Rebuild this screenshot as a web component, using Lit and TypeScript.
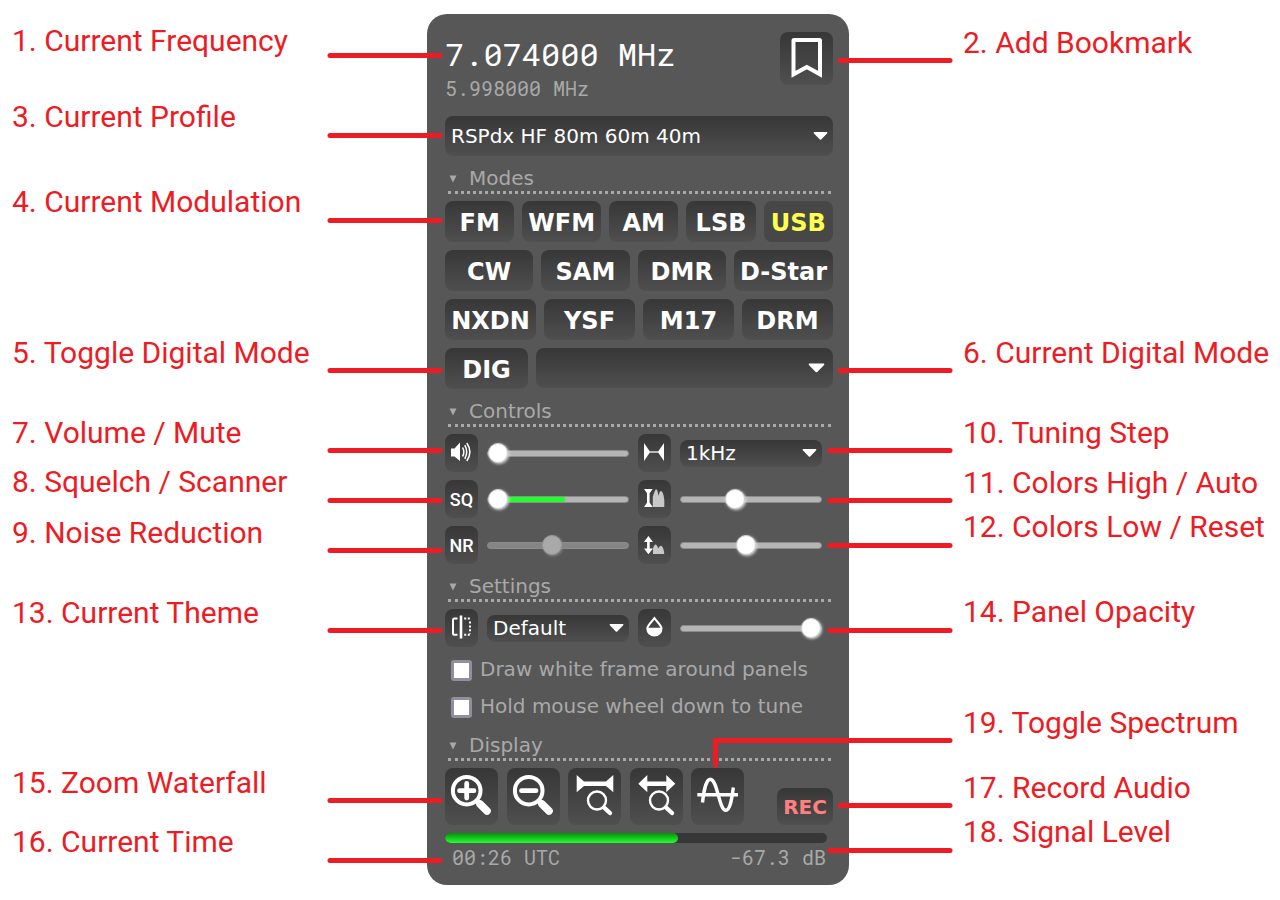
import { LitElement, html, css, svg } from "lit";
import { customElement, property } from "lit/decorators.js";

type Note = { text: string; y: number };

// Vertical centres of the callout texts, measured from the top of the figure.
const LEFT_NOTES: Note[] = [
  { text: "1. Current Frequency", y: 41 },
  { text: "3. Current Profile", y: 117 },
  { text: "4. Current Modulation", y: 202 },
  { text: "5. Toggle Digital Mode", y: 353 },
  { text: "7. Volume / Mute", y: 433 },
  { text: "8. Squelch / Scanner", y: 482 },
  { text: "9. Noise Reduction", y: 533 },
  { text: "13. Current Theme", y: 613 },
  { text: "15. Zoom Waterfall", y: 783 },
  { text: "16. Current Time", y: 842 },
];

const RIGHT_NOTES: Note[] = [
  { text: "2. Add Bookmark", y: 43 },
  { text: "6. Current Digital Mode", y: 353 },
  { text: "10. Tuning Step", y: 433 },
  { text: "11. Colors High / Auto", y: 483 },
  { text: "12. Colors Low / Reset", y: 527 },
  { text: "14. Panel Opacity", y: 612 },
  { text: "19. Toggle Spectrum", y: 723 },
  { text: "17. Record Audio", y: 788 },
  { text: "18. Signal Level", y: 832 },
];

// Leader lines, in coordinates of the panel column.
const LEADERS = [
  ...[55, 135, 220, 370, 450, 500, 550, 630, 800, 860].map((y) => `M-97 ${y + 0.5}H13`),
  "M413 60.5H523",
  "M413 370.5H523",
  "M403 450.5H523",
  "M403 500.5H523",
  "M403 545.5H523",
  "M403 630.5H523",
  "M288.5 765V740.5H523",
  "M413 805.5H523",
  "M403 850.5H523",
];

const MODES = [
  ["FM", "WFM", "AM", "LSB", "USB"],
  ["CW", "SAM", "DMR", "D-Star"],
  ["NXDN", "YSF", "M17", "DRM"],
];

const lens = svg`
  <circle cx="29" cy="32.5" r="9" fill="none" stroke="#fff" stroke-width="2.4"></circle>
  <path d="M36 39.5L42 45" stroke="#fff" stroke-width="4.4" stroke-linecap="round"></path>`;

const magnifier = svg`
  <circle cx="21.7" cy="22.7" r="13.8" fill="none" stroke="#fff" stroke-width="4"></circle>
  <path d="M31.5 32.5L34 35" stroke="#fff" stroke-width="5"></path>
  <path d="M35 36L42 43" stroke="#fff" stroke-width="7.6" stroke-linecap="round"></path>`;

const ICONS = {
  bookmark: svg`<path d="M13.5 8.5Q13.5 8 14 8H39.5Q40 8 40 8.5V42.3L26.8 35L13.5 42.3Z" fill="none" stroke="#fff" stroke-width="4"></path>`,
  speaker: svg`
    <path d="M6 14.5H9.5L15 8.5V27L9.5 22.5H6Z" fill="#fff"></path>
    <path d="M17.6 13.5Q20 18 17.6 22.5M19.8 11.2Q23.6 18 19.8 24.8M21.8 9Q28 18 21.8 27" fill="none" stroke="#fff" stroke-width="1.5"></path>`,
  step: svg`
    <path d="M11 18H21" stroke="#bbb" stroke-width="2"></path>
    <path d="M6 9L11.5 17V19L6 27ZM26 9L20.5 17V19L26 27Z" fill="#fff"></path>`,
  high: svg`
    <path d="M14.8 27V17Q17 9 18.3 9.3Q19.8 10 20.4 16Q21.6 11 23 11Q25.4 11.5 26.3 20V27Z" fill="#c8c8c8"></path>
    <path d="M6 9H14.7L11.6 13.2V22.8L14.7 27H6L9 22.8V13.2Z" fill="#fff"></path>`,
  low: svg`
    <path d="M15 28V22.5Q16.5 18 18 18.6Q19.5 20 20.2 22.5Q22 19 23.6 20Q25.8 22 26.3 28Z" fill="#c8c8c8"></path>
    <path d="M10.4 10L15 16H11.7V22.5H15L10.4 28.3L6 22.5H9.1V16H6Z" fill="#fff"></path>`,
  theme: svg`
    <path d="M12.5 9.6H9.6Q8 9.6 8 11.2V24.2Q8 25.8 9.6 25.8H12.5" fill="none" stroke="#fff" stroke-width="2"></path>
    <path d="M16 6.5V29.5" stroke="#fff" stroke-width="2.6"></path>
    <path d="M19.2 9.6H24.8M19.2 25.8H24.8" stroke="#fff" stroke-width="2" stroke-dasharray="2 1.6"></path>
    <path d="M25 12.6V24.4" stroke="#fff" stroke-width="2" stroke-dasharray="2 1.8"></path>`,
  drop: svg`
    <path d="M16.4 9.2C13.6 13 9.3 16.6 9.3 19.4A7.1 7.1 0 0 0 23.5 19.4C23.5 16.6 19.2 13 16.4 9.2Z" fill="none" stroke="#fff" stroke-width="2"></path>
    <path d="M9 18.7H23.8Q24 26 16.4 26.4Q9 26 9 18.7Z" fill="#fff"></path>`,
  zoomIn: svg`${magnifier}<path d="M14.5 22.7H29M21.7 15.5V30" stroke="#fff" stroke-width="4.8" stroke-linecap="round"></path>`,
  zoomOut: svg`${magnifier}<path d="M14.5 22.7H29" stroke="#fff" stroke-width="4.8" stroke-linecap="round"></path>`,
  zoomFit: svg`
    <path d="M8.7 7L16 13.4H38L45.3 7V24.3L38 18H16L8.7 24.3Z" fill="#fff"></path>${lens}`,
  zoomWide: svg`
    <path d="M8.3 15.7L17.3 7V13.4H36.3V7L45.3 15.7L36.3 24.3V18H17.3V24.3Z" fill="#fff"></path>${lens}`,
  wave: svg`
    <path d="M6.3 26.7H47" stroke="#fff" stroke-width="3.4"></path>
    <path d="M11.5 34.5C12.6 23 15.5 11.2 19.3 11.2C26.5 11.2 28 42.3 34.7 42.3C39.5 42.3 41 29 42.3 19.5" fill="none" stroke="#fff" stroke-width="3.4"></path>`,
};

@customElement("app-root")
export class AppRoot extends LitElement {
  @property() mode = "USB";

  static styles = css`
    :host {
      display: block;
      min-height: 100vh;
      background: #fff;
      font-family: "DejaVu Sans", Verdana, sans-serif;
      font-size: 20px;
    }
    * {
      box-sizing: border-box;
    }
    .stage {
      display: grid;
      grid-template-columns: minmax(427px, 1fr) 422px minmax(427px, 1fr);
      padding-right: 4px;
    }
    .notes {
      position: relative;
      margin: 0;
      padding: 0;
      list-style: none;
      font-family: Bahnschrift, Roboto, sans-serif;
      font-size: 30px;
      line-height: 36px;
      color: #ed1c24;
      white-space: nowrap;
    }
    .note {
      position: absolute;
      translate: 0 -50%;
    }
    .notes.left .note {
      left: calc(100% - 415px);
    }
    .notes.right .note {
      left: 114px;
    }
    .middle {
      position: relative;
      padding-top: 14px;
    }
    .leaders {
      position: absolute;
      top: 0;
      left: 0;
      width: 1px;
      height: 1px;
      overflow: visible;
      pointer-events: none;
      fill: none;
      stroke: #ed1c24;
      stroke-width: 5px;
      stroke-linecap: round;
    }
    .panel {
      padding: 18px 16px 15px 18px;
      border-radius: 20px;
      background: #575757;
      color: #a9a9a9;
    }
    .mono {
      font-family: "Roboto Mono", "DejaVu Sans Mono", monospace;
    }
    .header {
      display: flex;
      justify-content: space-between;
      align-items: flex-start;
      height: 84px;
    }
    .frequency {
      margin-top: 2px;
      font-size: 32px;
      line-height: 40px;
      color: #fff;
    }
    .cursor {
      line-height: 28px;
    }
    .btn,
    .select {
      margin: 0;
      border: 0;
      border-radius: 8px;
      background: linear-gradient(#373737, #4f4f4f);
      color: #fff;
      font-family: inherit;
    }
    .btn {
      padding: 0;
      display: block;
      cursor: pointer;
    }
    .btn svg {
      display: block;
    }
    .mode {
      flex: 1 1 0;
      height: 41px;
      padding: 3px 6px 0;
      font-size: 24px;
      font-weight: bold;
      line-height: 38px;
      white-space: nowrap;
    }
    .mode.on {
      background: #474747;
      color: #ffff50;
    }
    .picker {
      position: relative;
      display: block;
      flex: 1;
    }
    .select {
      display: block;
      width: 100%;
      height: 27px;
      padding: 0 30px 0 6px;
      appearance: none;
      font-size: 20px;
      line-height: 27px;
    }
    .tall .select {
      height: 40px;
      line-height: 40px;
    }
    .arrow {
      position: absolute;
      top: 50%;
      right: 5px;
      translate: 0 -50%;
      fill: #fff;
      pointer-events: none;
    }
    .wide .arrow {
      right: 8px;
    }
    .section {
      margin-top: 10px;
    }
    .title {
      display: flex;
      align-items: center;
      gap: 12px;
      height: 28px;
      margin: 0 2px 7px 3px;
      padding-left: 1px;
      border-bottom: 3px dotted #a9a9a9;
      line-height: 25px;
      list-style: none;
      cursor: pointer;
    }
    .rows {
      display: flex;
      flex-direction: column;
      gap: 8px;
    }
    .row {
      display: flex;
      align-items: flex-start;
      gap: 8px;
    }
    .dig {
      flex: 0 0 83px;
    }
    .controls {
      display: grid;
      grid-template-columns: 33px 1fr 33px 1fr;
      gap: 8px 9px;
      align-items: center;
      padding-right: 11px;
    }
    .small {
      width: 33px;
      height: 38px;
      font-family: Bahnschrift, "Roboto", sans-serif;
      font-size: 18px;
      font-weight: 500;
    }
    .slider {
      appearance: none;
      width: 100%;
      height: 20px;
      margin: 0;
      background: none;
      --track: #b5b5b5;
    }
    .slider::-webkit-slider-runnable-track {
      height: 7px;
      border: 1px solid #8c8c8c;
      border-radius: 4px;
      background: var(--track);
    }
    .slider::-webkit-slider-thumb {
      appearance: none;
      width: 20px;
      height: 20px;
      margin-top: -8px;
      border: 1px solid #ccc;
      border-radius: 50%;
      background: #fff;
      box-shadow: 1px 1px 3px #ddd;
    }
    .slider.squelch {
      --track: linear-gradient(90deg, #22ff2e 55%, #b5b5b5 55%);
    }
    .slider:disabled {
      --track: #858585;
    }
    .slider:disabled::-webkit-slider-thumb {
      border-color: #999;
      background: #a9a9a9;
      box-shadow: 1px 1px 3px #888;
    }
    .checks {
      display: flex;
      flex-direction: column;
      gap: 9px;
      padding: 8px 6px 3px;
    }
    .check {
      display: flex;
      align-items: center;
      gap: 8px;
      height: 28px;
      white-space: nowrap;
    }
    .box {
      appearance: none;
      flex: none;
      width: 21px;
      height: 21px;
      margin: 2px 0 0;
      border: 3px solid #8f8f9d;
      border-radius: 3px;
      background: #fff;
    }
    .display {
      display: flex;
      justify-content: space-between;
      align-items: flex-end;
    }
    .tools {
      display: flex;
      flex: 1;
      justify-content: space-between;
      margin-right: 33px;
    }
    .rec {
      width: 56px;
      height: 37px;
      color: #ff8080;
      font-size: 20px;
      font-weight: bold;
    }
    .meter {
      height: 10px;
      margin: 8px 6px 0 0;
      border-radius: 5px;
      background: #373737;
      overflow: hidden;
    }
    .level {
      height: 100%;
      border-radius: 5px;
      background: linear-gradient(#0a8c10, #22ff2e);
    }
    .status {
      display: flex;
      justify-content: space-between;
      padding: 1px 7px 0;
      line-height: 26px;
    }
  `;

  private icon(name: keyof typeof ICONS, w: number, h: number) {
    return html`<svg width=${w} height=${h} viewBox="0 0 ${w} ${h}" aria-hidden="true">${ICONS[name]}</svg>`;
  }

  private button(name: keyof typeof ICONS, label: string, w = 33, h = 38) {
    return html`<button class="btn" aria-label=${label}>${this.icon(name, w, h)}</button>`;
  }

  private picker(label: string, value: string, size = "") {
    const [w, h] = size === "tall wide" ? [17, 10] : [15, 9];
    return html`<label class="picker ${size}">
      <select class="select" aria-label=${label}><option>${value}</option></select>
      <svg class="arrow" width=${w} height=${h} viewBox="0 0 15 9" preserveAspectRatio="none">
        <path d="M1 0.5H14Q15 1 14 2L8.2 8Q7.5 8.6 6.8 8L1 2Q0 1 1 0.5Z"></path>
      </svg>
    </label>`;
  }

  private slider(label: string, value: number, cls = "", disabled = false) {
    return html`<input class="slider ${cls}" type="range" min="0" max="100" aria-label=${label} .value=${String(value)} ?disabled=${disabled} />`;
  }

  private title(text: string) {
    return html`<summary class="title">
      <svg width="8" height="8" viewBox="0 0 8 8" aria-hidden="true"><path d="M0.5 0.5H7.5L4 7.5Z" fill="#a9a9a9"></path></svg>
      <span>${text}</span>
    </summary>`;
  }

  private notes(side: string, items: Note[]) {
    return html`<ul class="notes ${side}">
      ${items.map((n) => html`<li class="note" style="top:${n.y}px">${n.text}</li>`)}
    </ul>`;
  }

  render() {
    return html`<main class="stage">
      ${this.notes("left", LEFT_NOTES)}
      <div class="middle">
        <section class="panel">
          <div class="header">
            <div class="mono">
              <div class="frequency">7.074000 MHz</div>
              <div class="cursor">5.998000 MHz</div>
            </div>
            ${this.button("bookmark", "Add bookmark", 53, 53)}
          </div>
          ${this.picker("Profile", "RSPdx HF 80m 60m 40m", "tall")}

          <details class="section" open>
            ${this.title("Modes")}
            <div class="rows">
              ${MODES.map((row) => html`<div class="row">
                ${row.map((m) => html`<button class="btn mode ${m === this.mode ? "on" : ""}" @click=${() => (this.mode = m)}>${m}</button>`)}
              </div>`)}
              <div class="row">
                <button class="btn mode dig">DIG</button>
                ${this.picker("Digital mode", "", "tall wide")}
              </div>
            </div>
          </details>

          <details class="section" open>
            ${this.title("Controls")}
            <div class="controls">
              ${this.button("speaker", "Mute")} ${this.slider("Volume", 0)}
              ${this.button("step", "Tuning step")} ${this.picker("Step", "1kHz")}
              <button class="btn small">SQ</button> ${this.slider("Squelch", 0, "squelch")}
              ${this.button("high", "Auto colors")} ${this.slider("Colors high", 37)}
              <button class="btn small">NR</button> ${this.slider("Noise reduction", 45, "", true)}
              ${this.button("low", "Reset colors")} ${this.slider("Colors low", 46)}
            </div>
          </details>

          <details class="section" open>
            ${this.title("Settings")}
            <div class="controls">
              ${this.button("theme", "Theme")} ${this.picker("Theme name", "Default")}
              ${this.button("drop", "Opacity")} ${this.slider("Panel opacity", 100)}
            </div>
            <div class="checks">
              <label class="check"><input class="box" type="checkbox" /><span>Draw white frame around panels</span></label>
              <label class="check"><input class="box" type="checkbox" /><span>Hold mouse wheel down to tune</span></label>
            </div>
          </details>

          <details class="section" open>
            ${this.title("Display")}
            <div class="display">
              <div class="tools">
                ${this.button("zoomIn", "Zoom in", 53, 57)}
                ${this.button("zoomOut", "Zoom out", 53, 57)}
                ${this.button("zoomFit", "Zoom to band", 53, 57)}
                ${this.button("zoomWide", "Zoom to full width", 53, 57)}
                ${this.button("wave", "Toggle spectrum", 53, 57)}
              </div>
              <button class="btn rec">REC</button>
            </div>
          </details>

          <div class="meter"><div class="level" style="width:61%"></div></div>
          <div class="status mono"><span>00:26 UTC</span><span>-67.3 dB</span></div>
        </section>
        <svg class="leaders" aria-hidden="true">${LEADERS.map((d) => svg`<path d=${d}></path>`)}</svg>
      </div>
      ${this.notes("right", RIGHT_NOTES)}
    </main>`;
  }
}
